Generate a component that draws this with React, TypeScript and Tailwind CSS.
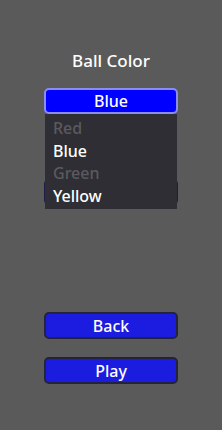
import { useState } from 'react'

const colors = [
  { name: 'Red', enabled: false },
  { name: 'Blue', enabled: true },
  { name: 'Green', enabled: false },
  { name: 'Yellow', enabled: true },
]

export default function App() {
  const [selected, setSelected] = useState('Blue')

  return (
    <div
      className="w-[222px] h-[430px] bg-[#5a5a5a] text-white flex flex-col px-[44px]"
      style={{ fontFamily: '"Noto Sans", "Open Sans", sans-serif' }}
    >
      <h1 className="mt-[49px] h-[24px] text-[17px] leading-[24px] font-medium text-center">Ball Color</h1>

      {/* Select + open list */}
      <div className="relative mt-[15px]">
        <button className="w-full h-[26px] rounded-[5px] border-2 border-[#8c8cf5] bg-[#0000ff] text-[16px] leading-[20px] font-medium">
          {selected}
        </button>

        <div className="absolute z-10 top-[26px] left-[1px] right-[1px] h-[95px] bg-[#2f2e34] pt-[3px]">
          {colors.map(c => (
            <div
              key={c.name}
              onClick={() => c.enabled && setSelected(c.name)}
              className={`h-[22.5px] pl-[8px] text-[16px] leading-[22.5px] font-medium ${c.enabled ? 'text-white' : 'text-[#5b5a60]'}`}
            >
              {c.name}
            </div>
          ))}
        </div>
      </div>

      {/* button hidden behind the list */}
      <div className="mt-[66px] h-[24px] rounded-[4px] border-2 border-[#1d1d4a] bg-[#1c1ce0]" />

      <button className="mt-[108px] h-[27px] rounded-[5px] border-2 border-[#23233a] bg-[#1c1ce0] text-[16px] leading-[20px] font-medium">
        Back
      </button>
      <button className="mt-[18px] h-[27px] rounded-[5px] border-2 border-[#23233a] bg-[#1c1ce0] text-[16px] leading-[20px] font-medium">
        Play
      </button>
    </div>
  )
}
